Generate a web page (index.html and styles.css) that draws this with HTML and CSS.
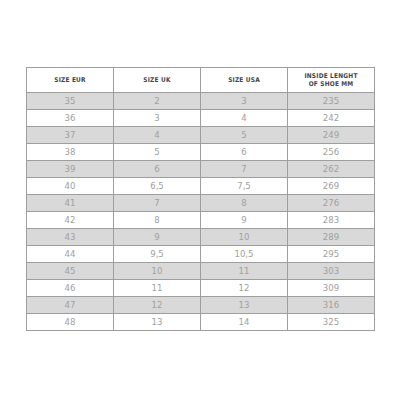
FILE: index.html
```html
<!DOCTYPE html>
<html>
<head>
<meta charset="utf-8">
<link rel="stylesheet" href="styles.css">
</head>
<body>
<div class="page">
<table class="sizes">
<thead>
<tr><th>SIZE EUR</th><th>SIZE UK</th><th>SIZE USA</th><th>INSIDE LENGHT<br>OF SHOE MM</th></tr>
</thead>
<tbody>
<tr><td>35</td><td>2</td><td>3</td><td>235</td></tr>
<tr><td>36</td><td>3</td><td>4</td><td>242</td></tr>
<tr><td>37</td><td>4</td><td>5</td><td>249</td></tr>
<tr><td>38</td><td>5</td><td>6</td><td>256</td></tr>
<tr><td>39</td><td>6</td><td>7</td><td>262</td></tr>
<tr><td>40</td><td>6,5</td><td>7,5</td><td>269</td></tr>
<tr><td>41</td><td>7</td><td>8</td><td>276</td></tr>
<tr><td>42</td><td>8</td><td>9</td><td>283</td></tr>
<tr><td>43</td><td>9</td><td>10</td><td>289</td></tr>
<tr><td>44</td><td>9,5</td><td>10,5</td><td>295</td></tr>
<tr><td>45</td><td>10</td><td>11</td><td>303</td></tr>
<tr><td>46</td><td>11</td><td>12</td><td>309</td></tr>
<tr><td>47</td><td>12</td><td>13</td><td>316</td></tr>
<tr><td>48</td><td>13</td><td>14</td><td>325</td></tr>
</tbody>
</table>
</div>
</body>
</html>
```
FILE: styles.css
```css
html, body {
  margin: 0;
  padding: 0;
  background: #ffffff;
}
.page {
  padding: 67px 0 0 26px;
}
.sizes {
  border-collapse: collapse;
  width: 349px;
  table-layout: fixed;
  font-family: "DejaVu Sans Condensed", "DejaVu Sans", sans-serif;
  border: 1px solid #9e9e9e;
}
.sizes th, .sizes td {
  border: 1px solid #9e9e9e;
  text-align: center;
  padding: 0;
}
.sizes th {
  height: 24px;
  font-size: 6.5px;
  font-weight: bold;
  color: #454545;
  line-height: 8px;
  letter-spacing: 0.2px;
}
.sizes td {
  height: 16px;
  font-size: 9.5px;
  color: #a0a0a0;
  line-height: 16px;
}
.sizes tbody tr:nth-child(odd) td {
  background: #d9d9d9;
}
```
